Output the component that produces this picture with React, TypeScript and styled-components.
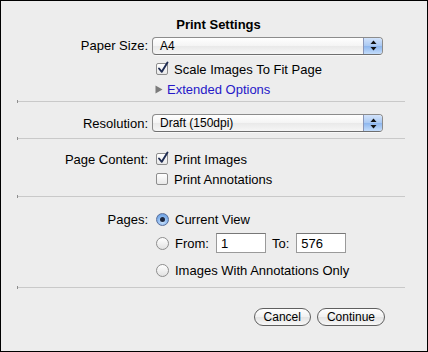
import styled, { createGlobalStyle } from 'styled-components'

const Global = createGlobalStyle`
  html, body { margin: 0; padding: 0; background: #ededed; }
  body { font-family: "Liberation Sans", Arial, sans-serif; font-size: 13px; color: #000; }
`

function Window() {
  return (
    <Frame>
      <Section pt={16} pb={3}>
        <Title>Print Settings</Title>
        <Row h={25}>
          <Label>Paper Size:</Label>
          <Select value='A4' />
        </Row>
        <Row h={22}>
          <span />
          <Check checked label='Scale Images To Fit Page' />
        </Row>
        <Row h={18}>
          <span />
          <Disclosure>
            <svg width='8' height='9' viewBox='0 0 8 9'><path d='M0.5 0.5 L7.5 4.5 L0.5 8.5 Z' fill='#7b7b7b' /></svg>
            <span>Extended Options</span>
          </Disclosure>
        </Row>
      </Section>
      <Rule />
      <Section pt={12} pb={6}>
        <Row h={18}>
          <Label>Resolution:</Label>
          <Select value='Draft (150dpi)' />
        </Row>
      </Section>
      <Rule />
      <Section pt={10} pb={7}>
        <Row h={20}>
          <Label>Page Content:</Label>
          <Check checked label='Print Images' />
        </Row>
        <Row h={20}>
          <span />
          <Check label='Print Annotations' />
        </Row>
      </Section>
      <Rule />
      <Section pt={12} pb={4}>
        <Row h={20}>
          <Label>Pages:</Label>
          <Radio selected label='Current View' />
        </Row>
        <Row h={28}>
          <span />
          <Option>
            <RadioDot />
            <span>From:</span>
            <Field defaultValue='1' />
            <span>To:</span>
            <Field defaultValue='576' />
          </Option>
        </Row>
        <Row h={26}>
          <span />
          <Radio label='Images With Annotations Only' />
        </Row>
      </Section>
      <Rule />
      <Footer>
        <Button>Cancel</Button>
        <Button>Continue</Button>
      </Footer>
    </Frame>
  )
}

function Select({ value }: { value: string }) {
  return (
    <Popup>
      <span>{value}</span>
      <Stepper>
        <svg width='7' height='11' viewBox='0 0 7 11'>
          <path d='M3.5 0.5 L6.5 4 L0.5 4 Z' fill='#111' />
          <path d='M3.5 10.5 L6.5 7 L0.5 7 Z' fill='#111' />
        </svg>
      </Stepper>
    </Popup>
  )
}

function Check({ checked, label }: { checked?: boolean; label: string }) {
  return (
    <Option>
      <Box>
        {checked && (
          <svg width='14' height='15' viewBox='0 0 14 15'>
            <path d='M3 8.5 L5.8 11.8 L11.5 2.5' fill='none' stroke='#1f2c52' strokeWidth='1.9' strokeLinecap='round' strokeLinejoin='round' />
          </svg>
        )}
      </Box>
      <span>{label}</span>
    </Option>
  )
}

function Radio({ selected, label }: { selected?: boolean; label: string }) {
  return (
    <Option>
      <RadioDot on={selected} />
      <span>{label}</span>
    </Option>
  )
}

const Frame = styled.div`
  width: 428px;
  height: 352px;
  box-sizing: border-box;
  border: 1px solid #000;
  background: #ededed;
  overflow: hidden;
`

const Section = styled.div<{ pt: number; pb: number }>`
  padding-top: ${p => p.pt}px;
  padding-bottom: ${p => p.pb}px;
`

const Title = styled.div`
  height: 16px;
  line-height: 16px;
  font-weight: 700;
  text-align: center;
  padding-left: 9px;
`

const Row = styled.div<{ h: number }>`
  display: grid;
  grid-template-columns: 147px 1fr;
  column-gap: 4px;
  align-items: center;
  height: ${p => p.h}px;
`

const Label = styled.div`
  text-align: right;
  white-space: nowrap;
`

const Popup = styled.div`
  position: relative;
  width: 231px;
  height: 18px;
  box-sizing: border-box;
  border: 1px solid #8c8c8c;
  border-bottom-color: #6f6f6f;
  border-radius: 4px;
  background: linear-gradient(#ffffff, #f4f4f4 50%, #e9e9e9 51%, #f6f6f6);
  display: flex;
  align-items: center;
  font-size: 12px;
  padding-left: 7px;
  overflow: hidden;
  box-shadow: 0 1px 0 rgba(255,255,255,0.6);
`

const Stepper = styled.div`
  position: absolute;
  right: 0;
  top: 0;
  bottom: 0;
  width: 18px;
  border-left: 1px solid #8a96b8;
  background: linear-gradient(#d2e3fb, #a9c8f2 50%, #8db6ee 51%, #c4ddfb);
  display: flex;
  align-items: center;
  justify-content: center;
`

const Option = styled.div`
  display: flex;
  align-items: center;
  gap: 6px;
  padding-left: 4px;
  white-space: nowrap;
`

const Box = styled.div`
  position: relative;
  width: 12px;
  height: 12px;
  box-sizing: border-box;
  border: 1px solid #8d8d8d;
  border-radius: 2px;
  background: linear-gradient(#ffffff, #e8e8e8);
  flex: none;
  svg { position: absolute; left: -1px; top: -4px; }
`

const RadioDot = styled.div<{ on?: boolean }>`
  position: relative;
  width: 13px;
  height: 13px;
  box-sizing: border-box;
  border-radius: 50%;
  flex: none;
  border: 1px solid ${p => (p.on ? '#5a6f9a' : '#8d8d8d')};
  background: ${p => (p.on
    ? 'radial-gradient(circle at 50% 70%, #cfe4fc, #7fb0ec 60%, #5d8fd6)'
    : 'linear-gradient(#ffffff, #e2e2e2)')};
  &::after {
    content: '';
    display: ${p => (p.on ? 'block' : 'none')};
    position: absolute;
    left: 3px;
    top: 3px;
    width: 5px;
    height: 5px;
    border-radius: 50%;
    background: #1c2740;
  }
`

const Field = styled.input`
  width: 50px;
  height: 20px;
  box-sizing: border-box;
  border: 1px solid #9a9a9a;
  border-top-color: #777;
  background: #fff;
  font: 13px "Liberation Sans", Arial, sans-serif;
  padding: 0 4px;
  margin: 0 0 0 1px;
  outline: none;
`

const Disclosure = styled.div`
  display: flex;
  align-items: center;
  gap: 4px;
  padding-left: 3px;
  color: #2618c8;
`

const Rule = styled.div`
  position: relative;
  height: 1px;
  margin: 0 22px 0 16px;
  background: #c9c9c9;
  &::before {
    content: '';
    position: absolute;
    left: 0;
    top: -1px;
    width: 1px;
    height: 3px;
    background: #8e8e8e;
  }
`

const Footer = styled.div`
  display: flex;
  justify-content: flex-end;
  gap: 6px;
  padding: 20px 42px 0 0;
`

const Button = styled.button`
  height: 18px;
  padding: 0 9px;
  border: 1px solid #5f5f5f;
  border-radius: 9px;
  background: linear-gradient(#ffffff, #f1f1f1 50%, #e4e4e4 51%, #f7f7f7);
  font: 12px "Liberation Sans", Arial, sans-serif;
  color: #000;
  line-height: 16px;
`

export default function App() {
  return (
    <>
      <Global />
      <Window />
    </>
  )
}
